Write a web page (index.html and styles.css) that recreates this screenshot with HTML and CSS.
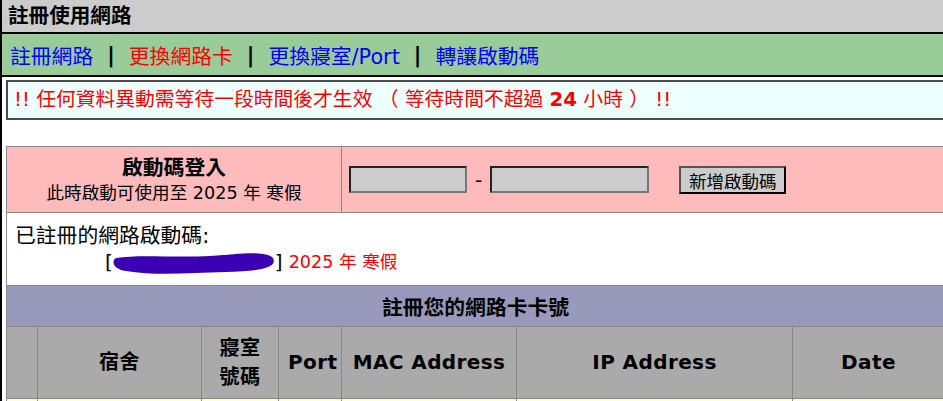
FILE: index.html
```html
<!DOCTYPE html>
<html lang="zh-Hant">
<head>
<meta charset="utf-8">
<title>註冊使用網路</title>
<link rel="stylesheet" href="styles.css">
</head>
<body>
<div class="frame">
  <div class="title">註冊使用網路</div>
  <nav class="nav">
    <a class="link">註冊網路</a><span class="sep">|</span>
    <a class="link current">更換網路卡</a><span class="sep">|</span>
    <a class="link">更換寢室/Port</a><span class="sep">|</span>
    <a class="link">轉讓啟動碼</a>
  </nav>
  <div class="notice">!! 任何資料異動需等待一段時間後才生效 （ 等待時間不超過 <b class="num">24</b> 小時 ） !!</div>

  <table class="reg">
    <colgroup>
      <col class="c1"><col class="c2"><col class="c3"><col class="c4"><col class="c5"><col class="c6"><col class="c7">
    </colgroup>
    <tr class="pink">
      <td colspan="4" class="login-label">
        <div class="login-title">啟動碼登入</div>
        <div class="login-sub">此時啟動可使用至 2025 年 寒假</div>
      </td>
      <td colspan="3" class="login-form">
        <div class="form-row">
          <input class="code code-a" type="text">
          <span class="dash">-</span>
          <input class="code code-b" type="text">
          <button class="btn" type="button">新增啟動碼</button>
        </div>
      </td>
    </tr>
    <tr class="white">
      <td colspan="7" class="registered">
        <div class="reg-label">已註冊的網路啟動碼:</div>
        <div class="reg-code">[<svg class="redact" width="166" height="26" viewBox="0 0 166 26"><path d="M6 9 C 30 5, 62 9, 100 7 C 130 5, 155 1, 163 9 C 168 19, 150 22, 115 23 C 80 24, 45 27, 16 22 C 3 20, 1 12, 6 9 Z" fill="#3b00b3"/></svg>]<span class="until">2025 年 寒假</span></div>
      </td>
    </tr>
    <tr class="purple">
      <td colspan="7" class="section">註冊您的網路卡卡號</td>
    </tr>
    <tr class="head">
      <th></th>
      <th>宿舍</th>
      <th>寢室號碼</th>
      <th>Port</th>
      <th>MAC Address</th>
      <th>IP Address</th>
      <th>Date</th>
    </tr>
    <tr class="yellow">
      <td>&nbsp;</td><td></td><td></td><td></td><td></td><td></td><td></td>
    </tr>
  </table>
</div>
</body>
</html>
```

FILE: styles.css
```css
html, body {
  margin: 0;
  padding: 0;
  overflow: hidden;
  background: #ffffff;
}

body {
  font-family: "DejaVu Sans", "Noto Sans CJK TC", sans-serif;
  color: #000000;
}

.frame {
  width: 960px;
  border-left: 2px solid #000000;
  min-height: 420px;
}

.title {
  background: #cccccc;
  height: 32px;
  line-height: 32px;
  padding-left: 6px;
  font-size: 20.6px;
  font-weight: bold;
  border-bottom: 2px solid #000000;
}

.nav {
  background: #99cc99;
  height: 41px;
  border-bottom: 2px solid #000000;
  display: flex;
  align-items: center;
  gap: 14px;
  padding-left: 8px;
  font-size: 20.8px;
}

.link {
  color: #0000ff;
  text-decoration: none;
}

.link.current {
  color: #ff0000;
}

.sep {
  color: #000000;
  font-weight: bold;
}

.notice {
  margin: 3px 0 0 4px;
  width: 932px;
  height: 36px;
  line-height: 36px;
  border: 2px solid #4a4a4a;
  background: #eeffff;
  color: #ff0000;
  font-size: 19.8px;
  padding-left: 6px;
  box-sizing: content-box;
  white-space: nowrap;
}

.num {
  font-weight: bold;
}

.reg {
  margin: 26px 0 0 4px;
  border-collapse: collapse;
  table-layout: fixed;
  width: 938px;
}

.reg td, .reg th {
  border: 1px solid #888888;
  padding: 0;
}

.c1 { width: 31px; }
.c2 { width: 164px; }
.c3 { width: 77px; }
.c4 { width: 63px; }
.c5 { width: 175px; }
.c6 { width: 276px; }
.c7 { width: 152px; }

.pink td {
  background: #ffbbbb;
  height: 65px;
}

.login-label {
  text-align: center;
}

.login-title {
  font-size: 20.8px;
  font-weight: bold;
  line-height: 26px;
}

.login-sub {
  font-size: 17.6px;
  line-height: 24px;
}

.form-row {
  display: flex;
  align-items: center;
  padding-left: 7px;
}

.code {
  box-sizing: border-box;
  height: 27px;
  background: #cccccc;
  border: 2px solid;
  border-color: #222222 #777777 #777777 #222222;
  padding: 0;
  margin: 0;
}

.code-a { width: 118px; }
.code-b { width: 159px; }

.dash {
  font-size: 20px;
  margin: 0 8px;
}

.btn {
  margin-left: 30px;
  box-sizing: border-box;
  height: 28px;
  width: 107px;
  padding: 0;
  background: #cccccc;
  border: 2px solid;
  border-color: #555555 #000000 #000000 #555555;
  font-family: "DejaVu Sans", "Noto Sans CJK TC", sans-serif;
  font-size: 17.5px;
  color: #000000;
}

.white td {
  background: #ffffff;
}

.registered {
  padding: 8px 0 8px 8px !important;
  height: 56px;
}

.reg-label {
  font-size: 20.8px;
  line-height: 26px;
}

.reg-code {
  padding-left: 90px;
  font-size: 20px;
  line-height: 27px;
  display: flex;
  align-items: center;
}

.redact {
  display: block;
  margin: 0 -1px 0 -3px;
}

.until {
  color: #ff0000;
  font-size: 17.6px;
  margin-left: 6px;
}

.purple td {
  background: #9999bb;
  height: 40px;
}

.section {
  text-align: center;
  font-size: 20.8px;
  font-weight: bold;
}

.head th {
  background: #aaaaaa;
  height: 71px;
  font-size: 20px;
  font-weight: bold;
  line-height: 29px;
  padding: 0 9px;
  letter-spacing: 0.4px;
}

.yellow td {
  background: #ffffcc;
  height: 30px;
}
```
